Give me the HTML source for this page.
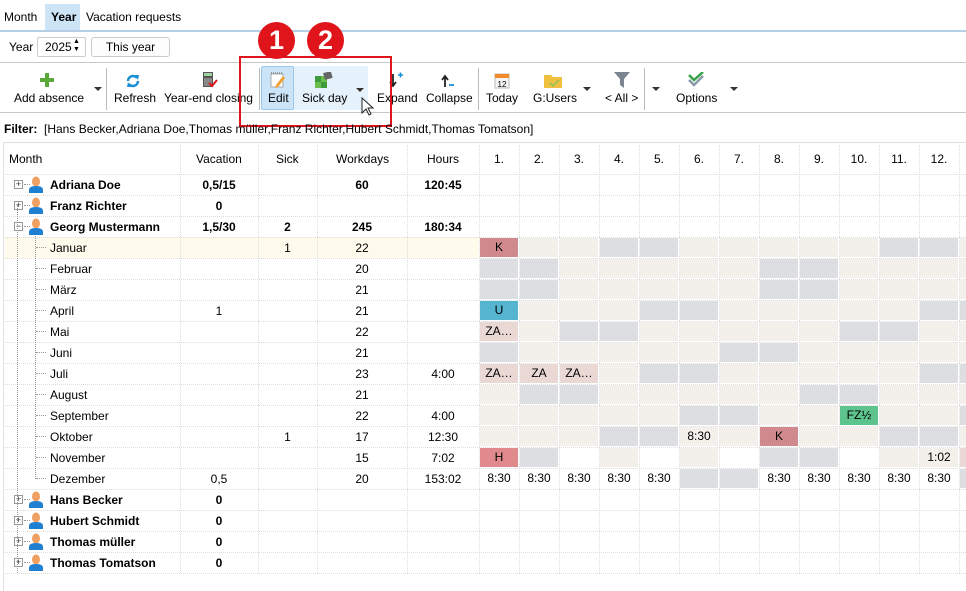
<!DOCTYPE html>
<html><head><meta charset="utf-8">
<style>
*{margin:0;padding:0;box-sizing:border-box}
body{width:966px;height:591px;overflow:hidden;background:#fff;font-family:"Liberation Sans",Arial,sans-serif;font-size:12px;color:#000;position:relative}
.a{position:absolute;white-space:nowrap}
.c{position:absolute;width:38px;height:19px;text-align:center;line-height:19px;font-size:12px}
.b{background:#f3f0ec}.g{background:#dddee2}.w{background:#fff}
.K{background:#d08a8e}.U{background:#55b4d0}.Z{background:#ead8d5}.H{background:#e08a8e}.F{background:#5ec48d}
.hl{position:absolute;left:5px;width:961px;height:0;border-top:1px dotted #dcdcdc}
.vl{position:absolute;top:145px;height:428px;width:0;border-left:1px dotted #dcdcdc}
.bold{font-weight:bold}
.lbl{position:absolute;top:91px;font-size:12px;white-space:nowrap}
.dd{position:absolute;width:0;height:0;border-left:4px solid transparent;border-right:4px solid transparent;border-top:4px solid #333}
.pb{position:absolute;width:9px;height:9px;border:1px solid #999;background:#fff;font-size:9px;line-height:7px;text-align:center;color:#333}
</style></head><body>

<!-- tabs -->
<div class="a" style="left:45px;top:4px;width:35px;height:26px;background:#cde4f7"></div>
<div class="a" style="left:4px;top:10px">Month</div>
<div class="a bold" style="left:51px;top:10px">Year</div>
<div class="a" style="left:86px;top:10px">Vacation requests</div>
<div class="a" style="left:0;top:30px;width:966px;height:2px;background:#b5cfe6"></div>

<div class="a" style="left:9px;top:40px">Year</div>
<div class="a" style="left:37px;top:37px;width:49px;height:20px;border:1px solid #ccc;border-radius:2px"></div>
<div class="a" style="left:45px;top:40px">2025</div>
<div class="a" style="left:73px;top:38px;font-size:7px;line-height:8px">▲<br>▼</div>
<div class="a" style="left:91px;top:37px;width:79px;height:20px;border:1px solid #ccc;border-radius:3px;background:#fdfdfd;text-align:center;line-height:18px">This year</div>

<!-- toolbar -->
<div class="a" style="left:0;top:62px;width:966px;height:1px;background:#c8c8c8"></div>
<div class="a" style="left:0;top:112px;width:966px;height:1px;background:#c8c8c8"></div>
<div class="a" style="left:106px;top:68px;width:1px;height:42px;background:#bbb"></div>
<div class="a" style="left:259px;top:68px;width:1px;height:42px;background:#bbb"></div>
<div class="a" style="left:478px;top:68px;width:1px;height:42px;background:#bbb"></div>
<div class="a" style="left:644px;top:68px;width:1px;height:42px;background:#bbb"></div>

<div class="a" style="left:261px;top:66px;width:33px;height:44px;background:#cce4f7;border:1px solid #99c9ef;border-radius:2px"></div>
<div class="a" style="left:294px;top:66px;width:74px;height:44px;background:#e5f1fb"></div>

<!-- icons -->
<svg class="a" style="left:40px;top:73px" width="14" height="14"><path d="M5 0h4v5h5v4H9v5H5V9H0V5h5z" fill="#58a83a"/></svg>
<svg class="a" style="left:125px;top:74px" width="16" height="14"><path d="M3 7a5 5 0 0 1 9-3" stroke="#1a8fd6" stroke-width="2.5" fill="none"/><path d="M13 7a5 5 0 0 1-9 3" stroke="#1a8fd6" stroke-width="2.5" fill="none"/><path d="M10 1l4 0-1 5z" fill="#1a8fd6"/><path d="M6 13l-4 0 1-5z" fill="#1a8fd6"/></svg>
<svg class="a" style="left:202px;top:72px" width="16" height="17"><rect x="1" y="0" width="10" height="15" fill="#555"/><rect x="2" y="1" width="8" height="3" fill="#9fd3a0"/><rect x="2" y="6" width="8" height="8" fill="#888"/><path d="M7 11l3 3 5-6" stroke="#e0141b" stroke-width="2" fill="none"/></svg>
<svg class="a" style="left:270px;top:72px" width="16" height="16"><rect x="1" y="2" width="12" height="13" fill="#fff" stroke="#aaa"/><path d="M1 1h12" stroke="#666" stroke-dasharray="1 1"/><path d="M6 13l7-9 2 2-7 9-3 1z" fill="#f0a030"/></svg>
<svg class="a" style="left:315px;top:72px" width="18" height="16"><rect x="0" y="4" width="6" height="6" fill="#3d9b3d"/><rect x="6" y="10" width="6" height="6" fill="#3d9b3d"/><rect x="0" y="10" width="6" height="6" fill="#6cbf4c"/><rect x="6" y="4" width="6" height="6" fill="#6cbf4c"/><rect x="9" y="0" width="8" height="7" fill="#666" transform="rotate(-15 13 4)"/></svg>
<svg class="a" style="left:389px;top:72px" width="14" height="16"><path d="M4 2v11M1 10l3 4 3-4" stroke="#222" stroke-width="1.8" fill="none"/><path d="M9 3h5M11.5 0.5v5" stroke="#1a8fd6" stroke-width="1.6"/></svg>
<svg class="a" style="left:441px;top:74px" width="14" height="14"><path d="M4 13V3M1 6l3-4 3 4" stroke="#222" stroke-width="1.8" fill="none"/><path d="M8 11h5" stroke="#1a8fd6" stroke-width="1.8"/></svg>
<svg class="a" style="left:494px;top:72px" width="16" height="17"><rect x="1" y="2" width="14" height="14" fill="#f3f3f3" stroke="#bbb"/><rect x="1" y="2" width="14" height="4" fill="#f08a2a"/><text x="8" y="15" font-size="8" text-anchor="middle" font-family="Liberation Sans">12</text></svg>
<svg class="a" style="left:544px;top:73px" width="18" height="15"><path d="M0 2h7l2 2h9v11H0z" fill="#f0c040"/><path d="M6 10l3 3 6-6" stroke="#8fc060" stroke-width="1.5" fill="none"/></svg>
<svg class="a" style="left:614px;top:72px" width="16" height="17"><path d="M0 0h16l-6 7v9l-4-3V7z" fill="#7a8590"/></svg>
<svg class="a" style="left:688px;top:72px" width="16" height="16"><path d="M1 8l5 5 9-9" stroke="#8a9aa8" stroke-width="2.5" fill="none"/><path d="M1 3l5 5 9-8" stroke="#3aa04a" stroke-width="2.5" fill="none"/></svg>

<div class="lbl" style="left:14px">Add absence</div>
<div class="dd" style="left:94px;top:87px"></div>
<div class="lbl" style="left:114px">Refresh</div>
<div class="lbl" style="left:164px">Year-end closing</div>
<div class="lbl" style="left:268px">Edit</div>
<div class="lbl" style="left:302px">Sick day</div>
<div class="dd" style="left:356px;top:88px"></div>
<div class="lbl" style="left:377px">Expand</div>
<div class="lbl" style="left:426px">Collapse</div>
<div class="lbl" style="left:486px">Today</div>
<div class="lbl" style="left:533px">G:Users</div>
<div class="dd" style="left:583px;top:87px"></div>
<div class="lbl" style="left:605px">&lt; All &gt;</div>
<div class="dd" style="left:652px;top:87px"></div>
<div class="lbl" style="left:676px">Options</div>
<div class="dd" style="left:730px;top:87px"></div>

<!-- red overlay -->
<div class="a" style="left:239px;top:56px;width:153px;height:71px;border:2px solid #e0141b"></div>
<div class="a" style="left:258px;top:22px;width:37px;height:37px;border-radius:50%;background:#e0141b;color:#fff;font-size:27px;font-weight:bold;text-align:center;line-height:37px">1</div>
<div class="a" style="left:307px;top:22px;width:37px;height:37px;border-radius:50%;background:#e0141b;color:#fff;font-size:27px;font-weight:bold;text-align:center;line-height:37px">2</div>
<svg class="a" style="left:361px;top:97px" width="14" height="20"><path d="M1 1v15l4-4 3 6 2-1-3-6h5z" fill="#fff" stroke="#222" stroke-width="1"/></svg>

<div class="a" style="left:4px;top:122px"><b>Filter:</b>&nbsp; [Hans Becker,Adriana Doe,Thomas müller,Franz Richter,Hubert Schmidt,Thomas Tomatson]</div>

<!-- grid -->
<div class="a" style="left:3px;top:142px;width:963px;height:449px;border:1px solid #e0e0e0;border-right:none;border-bottom:none"></div>
<div class="a" style="left:5px;top:237px;width:474px;height:21px;background:#fefbec"></div>
<div class="a" style="left:9px;top:152px">Month</div>
<div class="a" style="left:196px;top:152px">Vacation</div>
<div class="a" style="left:276px;top:152px">Sick</div>
<div class="a" style="left:336px;top:152px">Workdays</div>
<div class="a" style="left:427px;top:152px">Hours</div>
<div id="g"></div>

<script>
var h='';
var vx=[180,258,317,407,479];for(var i=1;i<13;i++)vx.push(479+40*i);
vx.forEach(function(x){h+='<div class="vl" style="left:'+x+'px"></div>'});
for(var i=0;i<12;i++)h+='<div class="a" style="left:'+(479+40*i)+'px;width:40px;text-align:center;top:152px">'+(i+1)+'.</div>';
for(var r=0;r<=19;r++)h+='<div class="hl" style="top:'+(174+21*r)+'px"></div>';
var rows=[
['Adriana Doe',1,'0,5/15','','60','120:45'],
['Franz Richter',1,'0','','',''],
['Georg Mustermann',1,'1,5/30','2','245','180:34'],
['Januar',0,'','1','22',''],['Februar',0,'','','20',''],['März',0,'','','21',''],['April',0,'1','','21',''],['Mai',0,'','','22',''],['Juni',0,'','','21',''],['Juli',0,'','','23','4:00'],['August',0,'','','21',''],['September',0,'','','22','4:00'],['Oktober',0,'','1','17','12:30'],['November',0,'','','15','7:02'],['Dezember',0,'0,5','','20','153:02'],
['Hans Becker',1,'0','','',''],['Hubert Schmidt',1,'0','','',''],['Thomas müller',1,'0','','',''],['Thomas Tomatson',1,'0','','','']];
var cx=[[180,258],[258,317],[317,407],[407,479]];
rows.forEach(function(r,i){var y=174+21*i;var ty=y+4;
 if(r[1]){var mm=(i==2)?'−':'+';
  h+='<div class="pb" style="left:14px;top:'+(y+6)+'px">'+mm+'</div>';
  h+='<div class="a" style="left:24px;top:'+(y+10)+'px;width:6px;border-top:1px dotted #999"></div>';
  h+='<svg class="a" style="left:28px;top:'+(y+2)+'px" width="16" height="17"><ellipse cx="8" cy="5.5" rx="4" ry="5" fill="#f0a060"/><path d="M1 17v-3q0-4 7-4t7 4v3z" fill="#1f7fd0"/></svg>';
  h+='<div class="a bold" style="left:50px;top:'+ty+'px">'+r[0]+'</div>';
 } else {
  h+='<div class="a" style="left:36px;top:'+(y+10)+'px;width:10px;border-top:1px dotted #999"></div>';
  h+='<div class="a" style="left:50px;top:'+ty+'px">'+r[0]+'</div>';
 }
 for(var k=0;k<4;k++){if(r[k+2])h+='<div class="a'+(r[1]?' bold':'')+'" style="left:'+cx[k][0]+'px;width:'+(cx[k][1]-cx[k][0])+'px;text-align:center;top:'+ty+'px">'+r[k+2]+'</div>';}
});
h+='<div class="a" style="left:17px;top:205px;height:368px;border-left:1px dotted #999"></div>';
h+='<div class="a" style="left:17px;top:205px;height:352px;border-left:1px dotted #999"></div>';
h+='<div class="a" style="left:35px;top:236px;height:243px;border-left:1px dotted #999"></div>';
var D=[
'K b b g g b b b b b g g b','g g b b b b b g g b b b b','g g b b b b b g g b b b b','U b b b g g b b b b b g g',
'Z:ZA… b g g b b b b b g g b b','g b b b b b g g b b b b b','Z:ZA… Z:ZA Z:ZA… b g g b b b b b g g','b g g b b b b b g g b b b',
'b b b b b g g b b F:FZ½ b b g','b b b g g b:8:30 b K b b g g b','H g w b w b w g g w b b:1:02 Z',
'w:8:30 w:8:30 w:8:30 w:8:30 w:8:30 g g w:8:30 w:8:30 w:8:30 w:8:30 w:8:30 g'];
D.forEach(function(s,ri){var y=237+21*ri+1;s.split(' ').forEach(function(t,ci){var p=t.split(':');var c=p[0];var tx=p.slice(1).join(':');
 if(c=='K')tx='K';if(c=='U')tx='U';if(c=='H')tx='H';
 var w=ci==12?7:38;
 h+='<div class="c '+c+'" style="left:'+(479+40*ci+1)+'px;top:'+y+'px;width:'+w+'px">'+(ci==12?'':tx)+'</div>';});});
document.getElementById('g').innerHTML=h;
</script>
</body></html>
